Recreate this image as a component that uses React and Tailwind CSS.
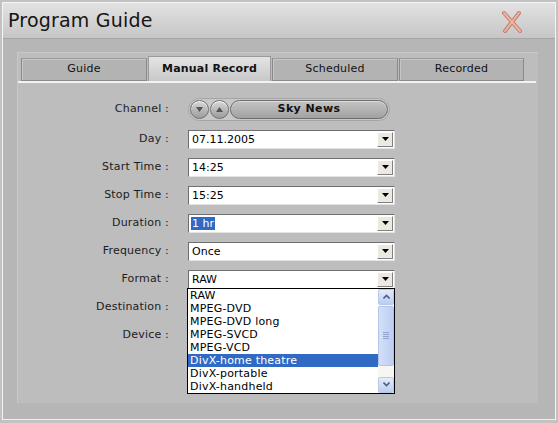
import React from 'react';

const font = { fontFamily: '"DejaVu Sans", Verdana, sans-serif' };

const tabs = [
  { label: 'Guide', w: 'w-[126px]' },
  { label: 'Manual Record', w: 'w-[123px]', active: true },
  { label: 'Scheduled', w: 'w-[126px]' },
  { label: 'Recorded', w: 'w-[125px]' },
];

const formats = ['RAW', 'MPEG-DVD', 'MPEG-DVD long', 'MPEG-SVCD', 'MPEG-VCD', 'DivX-home theatre', 'DivX-portable', 'DivX-handheld'];

const ArrowBtn = () => (
  <div className="w-[16px] h-[15px] bg-[#ece9e3] border border-t-[#ffffff] border-l-[#ffffff] border-r-[#808080] border-b-[#808080] flex items-center justify-center">
    <svg width="7" height="4" viewBox="0 0 7 4"><path d="M0 0h7L3.5 4z" fill="#000" /></svg>
  </div>
);

const SelectBox = ({ value, selected }) => (
  <div className="w-[207px] h-[19px] bg-white border border-t-[#6f6f6f] border-l-[#6f6f6f] border-r-[#e4e4e4] border-b-[#e4e4e4] flex items-center justify-between pl-[2px] pr-[1px]">
    <span className={`text-[11px] leading-[13px] px-[1px] ${selected ? 'bg-[#316ac5] text-white' : 'text-black'}`}>{value}</span>
    <ArrowBtn />
  </div>
);

const Row = ({ label, children, className = '' }) => (
  <div className={`flex items-center h-[28px] ${className}`}>
    <div className="w-[152px] text-right text-[11px] text-[#1c1c1c] pr-[1px] tracking-[0.2px]">{label} :</div>
    <div className="ml-[18px] relative">{children}</div>
  </div>
);

const RoundBtn = ({ up }) => (
  <div className="w-[19px] h-[19px] rounded-full bg-gradient-to-b from-[#d8d8d8] to-[#9c9c9c] border border-[#707070] flex items-center justify-center shadow-[inset_0_1px_0_#ffffff]">
    <svg width="7" height="5" viewBox="0 0 7 5">
      {up ? <path d="M0 5h7L3.5 0z" fill="#555" /> : <path d="M0 0h7L3.5 5z" fill="#555" />}
    </svg>
  </div>
);

export default function App() {
  return (
    <div className="w-[558px] h-[423px] bg-[#c2c2c2] p-[2px]" style={font}>
      <div className="h-[418px] flex flex-col border border-[#f4f4f4] border-b-[#f0f0f0]">
        {/* title bar */}
        <div className="h-[36px] flex items-center justify-between bg-gradient-to-b from-[#e2e2e2] to-[#c6c6c6] border-b border-[#a6a6a6] pl-[5px] pr-[31px]">
          <span className="text-[19px] text-[#151515] tracking-[0.2px]">Program Guide</span>
          <svg width="24" height="24" viewBox="0 0 24 24" className="mt-[2px]">
            <g stroke="#c47f6c" strokeWidth="4" strokeLinecap="round">
              <line x1="4" y1="3" x2="20" y2="21" />
              <line x1="19" y1="3" x2="5" y2="21" />
            </g>
            <g stroke="#eeb3a2" strokeWidth="2" strokeLinecap="round">
              <line x1="4" y1="3" x2="20" y2="21" />
              <line x1="19" y1="3" x2="5" y2="21" />
            </g>
          </svg>
        </div>

        {/* body */}
        <div className="flex-1 bg-[#b6b6b6] pl-[14px] pt-[13px] pr-[17px] pb-[16px]">
          <div className="h-full bg-[#bdbdbd] border-l border-t border-[#c8c8c8]">
            {/* tabs */}
            <div className="flex gap-[1px] pl-[3px] pt-[3px] items-end">
              {tabs.map((t) => (
                <div
                  key={t.label}
                  className={`${t.w} flex items-center justify-center text-[11px] text-[#111] tracking-[0.2px] ${
                    t.active
                      ? 'h-[25px] font-bold bg-gradient-to-b from-[#e4e4e4] to-[#c8c8c8] border-t border-l border-r border-[#9a9a9a]'
                      : 'h-[23px] bg-[#b3b3b3] border border-[#8a8a8a] border-t-[#9c9c9c] shadow-[inset_1px_1px_0_#c6c6c6]'
                  }`}
                >
                  {t.label}
                </div>
              ))}
            </div>
            <div className="h-[2px] bg-[#f2f2f2] mr-[2px]" />

            {/* form */}
            <div className="pt-[12px]">
              <Row label="Channel">
                <div className="w-[202px] h-[23px] rounded-full bg-[#c8c8c8] border border-[#a4a4a4] flex items-center px-[1px] gap-[1px]">
                  <RoundBtn />
                  <RoundBtn up />
                  <div className="flex-1 h-[19px] rounded-full bg-gradient-to-b from-[#c4c4c4] to-[#a2a2a2] border border-[#6c6c6c] flex items-center justify-center text-[11px] font-bold text-[#111] tracking-[0.4px] shadow-[inset_0_1px_0_#dcdcdc]">
                    Sky News
                  </div>
                </div>
              </Row>
              <Row label="Day" className="mt-[2px]"><SelectBox value="07.11.2005" /></Row>
              <Row label="Start Time"><SelectBox value="14:25" /></Row>
              <Row label="Stop Time"><SelectBox value="15:25" /></Row>
              <Row label="Duration"><SelectBox value="1 hr" selected /></Row>
              <Row label="Frequency"><SelectBox value="Once" /></Row>
              <Row label="Format">
                <SelectBox value="RAW" />
                {/* open list */}
                <div className="absolute left-[-1px] top-[18px] w-[208px] h-[106px] bg-white border border-black flex z-10">
                  <div className="flex-1 flex flex-col">
                    {formats.map((f) => (
                      <div
                        key={f}
                        className={`h-[13px] leading-[13px] text-[11px] pl-[2px] tracking-[0.2px] ${
                          f === 'DivX-home theatre' ? 'bg-[#316ac5] text-white' : 'text-black'
                        }`}
                      >
                        {f}
                      </div>
                    ))}
                  </div>
                  <div className="w-[16px] flex flex-col bg-[#f6f6f3]">
                    <div className="h-[16px] rounded-[2px] bg-gradient-to-b from-[#e4ecfc] to-[#bccdf0] border border-[#b8c8e8] flex items-center justify-center">
                      <svg width="7" height="5" viewBox="0 0 7 5"><path d="M0.5 4.5L3.5 1.5L6.5 4.5" stroke="#4d6185" strokeWidth="1.6" fill="none" /></svg>
                    </div>
                    <div className="h-[60px] mt-[1px] rounded-[2px] bg-gradient-to-r from-[#d4e0f8] to-[#bccef4] border border-[#b0c4ec] flex flex-col items-center justify-center gap-[1px]">
                      <div className="w-[6px] h-[1px] bg-[#8ea4cc]" />
                      <div className="w-[6px] h-[1px] bg-[#8ea4cc]" />
                      <div className="w-[6px] h-[1px] bg-[#8ea4cc]" />
                      <div className="w-[6px] h-[1px] bg-[#8ea4cc]" />
                    </div>
                    <div className="flex-1" />
                    <div className="h-[16px] rounded-[2px] bg-gradient-to-b from-[#e4ecfc] to-[#bccdf0] border border-[#b8c8e8] flex items-center justify-center">
                      <svg width="7" height="5" viewBox="0 0 7 5"><path d="M0.5 0.5L3.5 3.5L6.5 0.5" stroke="#4d6185" strokeWidth="1.6" fill="none" /></svg>
                    </div>
                  </div>
                </div>
              </Row>
              <Row label="Destination"><div className="h-[19px]" /></Row>
              <Row label="Device"><div className="h-[19px]" /></Row>
            </div>
          </div>
        </div>
      </div>
    </div>
  );
}
